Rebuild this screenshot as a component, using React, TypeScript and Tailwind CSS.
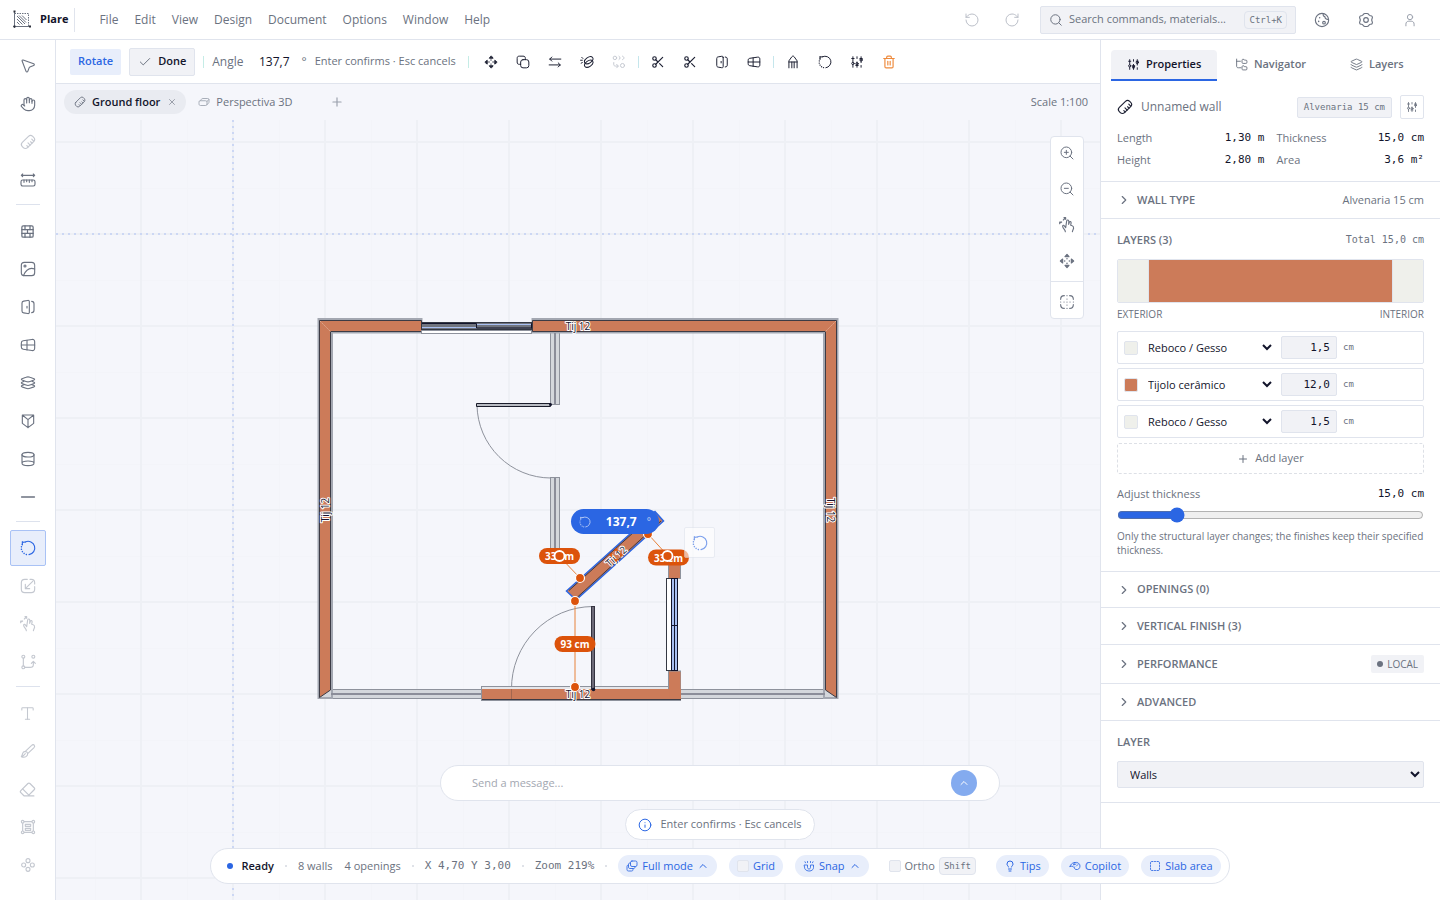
import { useState, type ReactNode } from 'react'
import { Hand, BrickWall, Type, Eraser, Scissors, ZoomIn, ZoomOut, RotateCcw, RotateCw, Search, Check, X, Plus, Minus, Trash2, ChevronRight, ChevronUp, Info, Lightbulb, Layers } from 'lucide-react'
import clsx from 'clsx'

const glyphs: Record<string, ReactNode> = {
  cursor: <path d="M3.2 4.6c-.4-1.1.4-1.9 1.500-1.500l15.800 5.600c1.300.5 1.300 2.100 0 2.600l-5.700 2.100c-.5.2-.8.5-1 1l-2.100 5.600c-.5 1.300-2.100 1.300-2.600 0z" />,
  wall: (
    <g transform="rotate(-45 12 12)">
      <rect x="1" y="6.500" width="22" height="11" rx="4.500" />
      <path d="M7 17.500v-3M11 17.500v-4.500M15 17.500v-3M19 17v-4" />
    </g>
  ),
  measure: (
    <>
      <rect x="1.500" y="12" width="21" height="9" rx="2.500" />
      <path d="M6 12v3.500M10 12v2.500M14 12v3.500M18 12v2.500M2 5h20M4 3 2 5l2 2M20 3l2 2-2 2" />
    </>
  ),
  image: (
    <>
      <rect x="2" y="2" width="20" height="20" rx="4.500" />
      <circle cx="7.500" cy="7.500" r="1.500" />
      <path d="M5 22c4-9 9-13 17-10" />
    </>
  ),
  door: (
    <>
      <path d="M14 4v16c0 1.500-1 2-2.500 1.800l-6-1C3.700 20.500 3 19.500 3 18V6c0-1.500.7-2.500 2.500-2.800l6-1C13 2 14 2.500 14 4z" />
      <path d="M10.500 11v2.500M17.500 3.500c2.500 0 3.500 1 3.500 3.500v10c0 2.500-1 3.500-3.500 3.500" />
    </>
  ),
  window: (
    <>
      <path d="M2 9c0-2 .8-3 2.800-3.300l13-2c2.700-.4 4.200.8 4.200 3.300v10c0 2.500-1.500 3.700-4.200 3.300l-13-2C2.800 18 2 17 2 15z" />
      <path d="M2 12h20M10.500 5v14.500" />
    </>
  ),
  stack: (
    <>
      <path d="M3 7.500c-1.300-.7-1.300-1.300 0-2l6-2c2-.8 4-.8 6 0l6 2c1.300.7 1.300 1.300 0 2l-6 2.200c-2 .8-4 .8-6 0z" />
      <path d="M6 9.500l-3 1.400c-1.300.7-1.300 1.300 0 2l6 2.200c2 .8 4 .8 6 0l6-2.200c1.300-.7 1.300-1.300 0-2l-3-1.400" />
      <path d="M6 14.500l-3 1.300c-1.300.7-1.300 1.300 0 2l6 2.200c2 .8 4 .8 6 0l6-2.200c1.300-.7 1.300-1.300 0-2l-3-1.300" />
    </>
  ),
  prism: <path d="M3.500 3h17v12.500L12 22l-8.500-6.500zM3.500 3 12 10l8.500-7M12 10v12" />,
  column: (
    <>
      <ellipse cx="12" cy="5.500" rx="9" ry="3.500" />
      <path d="M3 5.500v13c0 4.600 18 4.600 18 0v-13M3 18.500c0-4.600 18-4.600 18 0" />
    </>
  ),
  rotate: (
    <>
      <path d="M8 2.900A10 10 0 1 1 13.500 21.900" />
      <path d="M9.500 21.700A10 10 0 0 1 3.500 6.700" strokeDasharray="0.100 3.600" strokeWidth="2.200" />
      <path d="M3.500 2.500v4.500M3.500 3.500 8 3" />
    </>
  ),
  rescale: (
    <>
      <path d="M11 2H7C3.500 2 2 3.500 2 7v10c0 3.500 1.500 5 5 5h10c3.500 0 5-1.500 5-5v-4M15 2h2c3.500 0 5 1.500 5 5v2" />
      <path d="M19 5 8 16M8 9.500V16h6.500" />
    </>
  ),
  pinch: (
    <>
      <path d="M9.500 22c0-3-3.500-4.500-4-8-.1-1.700 1.500-2.200 2.500-.8l2 2.800 1.500-10c.4-2.200 3.200-1.800 3.200.3L14.500 11l1-3c.7-1.800 3-1.200 2.700.8l-.7 3.500 1.600.4c2.500.7 3 2 2.800 4-.2 2-1.600 3-1.800 5.300" />
      <path d="M1 10V7.500h2.500M7.500 1H10v2.500M2.500 8.500l1.500-1M6.500 4.500 9 2" />
    </>
  ),
  nodes: (
    <>
      <circle cx="5" cy="4" r="2.200" />
      <circle cx="5" cy="20" r="2.200" />
      <circle cx="20" cy="4" r="2.200" />
      <path d="M5 6v12M7 20h8c3.500 0 5-1 5-4v-5M17 14l3-3 3 3" />
    </>
  ),
  brush: <path d="M8 12.500 17.500 3.500c1.500-1.500 3-1.500 4 0 .8 1 .5 2.500-.8 3.800L11.500 16M8 12.500c-2 .3-3.500 1-4 3-.4 1.800-.8 3.500-2 5 3 1.500 5.500 1 7.500-.5 1.200-1 2-2.300 2-4M8 12.500c2 .3 3.200 1.500 3.500 3.500M4 20l4-4" />,
  frame: (
    <>
      <rect x="4" y="4" width="16" height="16" />
      <circle cx="4" cy="4" r="2" fill="white" />
      <circle cx="20" cy="4" r="2" fill="white" />
      <circle cx="4" cy="20" r="2" fill="white" />
      <circle cx="20" cy="20" r="2" fill="white" />
      <rect x="8" y="8" width="8" height="3" />
      <rect x="8" y="14" width="8" height="3" />
    </>
  ),
  clover: (
    <>
      <circle cx="12" cy="5.500" r="3" />
      <circle cx="5.500" cy="12" r="3" />
      <circle cx="18.500" cy="12" r="3" />
      <circle cx="12" cy="18.500" r="3" />
    </>
  ),
  move: (
    <>
      <path d="M12 2 9 5.500h6zM12 22l-3-3.500h6zM2 12l3.500-3v6zM22 12l-3.500-3v6z" fill="currentColor" />
      <path d="M12 8.500v.1M12 15.500v.1M8.500 12h.1M15.500 12h.1" strokeWidth="2.200" />
    </>
  ),
  copy: (
    <>
      <rect x="8" y="8" width="14" height="14" rx="4" />
      <path d="M16 8V6c0-3-1-4-4-4H6C3 2 2 3 2 6v6c0 3 1 4 4 4h2" />
    </>
  ),
  swap: <path d="M22 7H3M6.500 3.500 3 7l3.500 3.500M2 17h19M17.500 13.500 21 17l-3.500 3.500" />,
  offset: (
    <>
      <ellipse cx="15" cy="9" rx="8" ry="5" transform="rotate(-35 15 9)" />
      <ellipse cx="15" cy="15" rx="8" ry="5" transform="rotate(-35 15 15)" />
      <path d="M1 9h3M2 14l2-1M3 4l2 2" />
    </>
  ),
  array: (
    <>
      <circle cx="5" cy="5" r="3" />
      <circle cx="18" cy="18" r="3.500" />
      <path d="M12 2c2.500 1 2.500 5 0 6M18 2c3.500 1 3.500 5 0 6M3 13v3c0 2 1 3 3 3h4M8 16l3 3-3 3" />
    </>
  ),
  pencil: <path d="M5 22V10l5-7c1-1.500 3-1.500 4 0l5 7v12M5 12h14M10 12v10M14 12v10" />,
  sliders: (
    <>
      <path d="M5 3v9M5 17v4M12 3v3M12 12v9M19 3v10M19 18v3M3 6h4M17 6h4M10 18h4" />
      <circle cx="5" cy="14.500" r="2" />
      <circle cx="12" cy="15" r="2" />
      <circle cx="19" cy="8.500" r="2" />
    </>
  ),
  cookie: (
    <>
      <circle cx="12" cy="12" r="10" />
      <path d="M14 2.200c-.8 2.300 0 4.300 2.200 4.800.3 2.500 2.300 4.500 5.500 4" />
      <circle cx="15" cy="16" r="2" />
      <path d="M8.500 8.500v.1M7 14v.1" strokeWidth="2.200" />
    </>
  ),
  gear: (
    <>
      <circle cx="12" cy="12" r="3.500" />
      <path d="M8 3.500c.7-1 1.300-1.300 2.500-1.300h3c1.200 0 1.800.3 2.500 1.300l1 1.400c.4.500.8.700 1.500.700h1c1 .1 1.700.8 2 1.800.3 1 .1 1.700-.4 2.500-.8 1.400-.8 2.800 0 4.200.5.8.7 1.500.4 2.500-.3 1-1 1.700-2 1.800h-1c-.7 0-1.100.2-1.500.7l-1 1.400c-.7 1-1.300 1.300-2.500 1.300h-3c-1.200 0-1.800-.3-2.500-1.300l-1-1.400c-.4-.5-.8-.7-1.500-.7h-1c-1-.1-1.700-.8-2-1.800-.3-1-.1-1.700.4-2.500.8-1.400.8-2.800 0-4.200-.5-.8-.7-1.500-.4-2.500.3-1 1-1.700 2-1.800h1c.7 0 1.100-.2 1.500-.7z" />
    </>
  ),
  user: (
    <>
      <circle cx="12" cy="7" r="4.500" />
      <path d="M5 22v-3c0-3 2-5 5-5h4c3 0 5 2 5 5v3" />
    </>
  ),
  tree: (
    <>
      <path d="M3 2v13c0 2 1 3 3 3h5M3 6h7" />
      <path d="M13 4c0-1 .5-1.500 1.500-1.500h2l1 1.500H20c1.500 0 2 .5 2 2v2c0 1.500-.5 2-2 2h-5c-1.500 0-2-.5-2-2zM13 16c0-1 .5-1.500 1.500-1.500h2l1 1.500H20c1.500 0 2 .5 2 2v2c0 1.500-.5 2-2 2h-5c-1.500 0-2-.5-2-2z" />
    </>
  ),
  slab3d: <path d="M2 12c0-2 1-2.500 2.500-2.500H15c2 0 3 .5 3 2.500v4c0 2-1 3-3 3H5c-2 0-3-1-3-3zM4 9.500l3-3C7.800 5.500 8.500 5 10 5h9c2 0 3 .5 3 2.500V12c0 1-.3 1.500-1 2.200l-3.500 3.500M18 11l3.500-4" />,
  fit: (
    <>
      <path d="M2.500 8c0-4 1.500-5.500 5.500-5.500M16 2.500c4 0 5.500 1.500 5.500 5.500M21.500 16c0 4-1.500 5.500-5.500 5.500M8 21.500c-4 0-5.500-1.500-5.500-5.500" />
      <path d="M12 7.500v.1M12 12v.1M12 16.500v.1M7.500 12h.1M16.500 12h.1" />
      <path d="M12 2.500v.1M12 21.500v.1M2.500 12h.1M21.500 12h.1" />
    </>
  ),
  mode: (
    <>
      <rect x="9" y="2" width="13" height="11" rx="3" />
      <path d="M9 6H8C6 6 5 7 5 9v5c0 2 1 3 3 3h7c2 0 3-1 3-3v-1M5 10c-2 0-3 1-3 3v6c0 2 1 3 3 3h6c2 0 3-1 3-3v-2" />
    </>
  ),
  magnet: <path d="M3 10h6v5c0 4 6 4 6 0v-5h6v5c0 9.500-18 9.500-18 0zM5 5.500 4 3.500M9 5V3M15 5V3M19 5.500l1-2" />,
  copilot: <path d="M2 13c1-4 4-7 9-8 6-1.200 11 2 11 7s-4 8-8 7c-3-.7-4-3-3-5M2 13l4-1 3 2M11 5l-2 5 5-2M15 12l3-3" />,
  slab: <path d="M3 8V6c0-2 1-3 3-3h2M11 3h2M16 3h2c2 0 3 1 3 3v2M21 11v2M21 16v2c0 2-1 3-3 3h-2M13 21h-2M8 21H6c-2 0-3-1-3-3v-2M3 13v-2" />,
}

function Glyph({ name, className = 'size-4' }: { name: string; className?: string }) {
  return (
    <svg viewBox="0 0 24 24" fill="none" stroke="currentColor" strokeWidth="1.700" strokeLinecap="round" strokeLinejoin="round" className={clsx('shrink-0', className)} aria-hidden="true">
      {glyphs[name]}
    </svg>
  )
}

type Tool = { label: string; icon: ReactNode; off?: boolean }
const g = (name: string) => <Glyph name={name} />

const railGroups: Tool[][] = [
  [
    { label: 'Select', icon: g('cursor') },
    { label: 'Pan', icon: <Hand size={16} strokeWidth={1.7} /> },
    { label: 'Wall', icon: g('wall'), off: true },
    { label: 'Measure', icon: g('measure') },
  ],
  [
    { label: 'Bricks', icon: <BrickWall size={15} strokeWidth={2} /> },
    { label: 'Image', icon: g('image') },
    { label: 'Door', icon: g('door') },
    { label: 'Window', icon: g('window') },
    { label: 'Slab', icon: g('stack') },
    { label: 'Prism', icon: g('prism') },
    { label: 'Column', icon: g('column') },
    { label: 'Line', icon: <Minus size={22} strokeWidth={1.5} /> },
  ],
  [
    { label: 'Rotate', icon: g('rotate') },
    { label: 'Scale', icon: g('rescale'), off: true },
    { label: 'Stretch', icon: g('pinch'), off: true },
    { label: 'Edit nodes', icon: g('nodes'), off: true },
  ],
  [
    { label: 'Text', icon: <Type size={17} strokeWidth={1.5} />, off: true },
    { label: 'Brush', icon: g('brush'), off: true },
    { label: 'Erase', icon: <Eraser size={17} strokeWidth={1.7} />, off: true },
    { label: 'Frame', icon: g('frame'), off: true },
    { label: 'Group', icon: g('clover'), off: true },
  ],
]

const actionGroups: Tool[][] = [
  [
    { label: 'Move', icon: <Glyph name="move" className="size-[14px]" /> },
    { label: 'Copy', icon: <Glyph name="copy" className="size-[14px]" /> },
    { label: 'Mirror', icon: <Glyph name="swap" className="size-[14px]" /> },
    { label: 'Offset', icon: <Glyph name="offset" className="size-[14px]" /> },
    { label: 'Array', icon: <Glyph name="array" className="size-[14px]" />, off: true },
  ],
  [
    { label: 'Split', icon: <Scissors size={14} /> },
    { label: 'Trim', icon: <Scissors size={14} /> },
    { label: 'Add door', icon: <Glyph name="door" className="size-[14px]" /> },
    { label: 'Add window', icon: <Glyph name="window" className="size-[14px]" /> },
  ],
  [
    { label: 'Edit', icon: <Glyph name="pencil" className="size-[14px]" /> },
    { label: 'Rotate again', icon: <Glyph name="rotate" className="size-[14px]" /> },
    { label: 'Adjust', icon: <Glyph name="sliders" className="size-[14px]" /> },
    { label: 'Delete', icon: <Trash2 size={14} /> },
  ],
]

const mono = "font-['DejaVu_Sans_Mono',monospace]"

function TopBar() {
  return (
    <header className="flex h-10 shrink-0 items-center border-b border-[#e0e4ed] bg-white">
      <svg viewBox="0 0 20 20" className="ml-3 size-5" fill="none" stroke="#6b7280" aria-hidden="true">
        <path d="M2.500 1v17M1 16.500h17" stroke="#6b7280" />
        <path d="M2.500 3.500h14v13" strokeDasharray="1.500 1" />
        <path d="M5 6l8 8M7 5.500l7 7M5 9l5.500 5.500M10 5.500l4.500 4.500M5 12l2.500 2.500" strokeWidth="1" />
        <path d="M1.500 1.500h2M17 16.500h2M1.500 16.500h2" stroke="#2b2f3a" strokeWidth="2" />
      </svg>
      <div className="ml-2 flex h-6 items-center border-r border-[#e0e4ed] pr-1.5 text-[11px] font-bold text-[#12142b]">Plare</div>
      <nav className="ml-4 flex">
        {['File', 'Edit', 'View', 'Design', 'Document', 'Options', 'Window', 'Help'].map((m) => (
          <button key={m} className="px-2 py-1 text-xs text-[#6b7280]">{m}</button>
        ))}
      </nav>
      <div className="ml-auto flex items-center">
        <button aria-label="Undo" className="grid size-10 place-items-center text-[#bcc0c9]"><RotateCcw size={16} strokeWidth={1.5} /></button>
        <button aria-label="Redo" className="grid size-10 place-items-center text-[#bcc0c9]"><RotateCw size={16} strokeWidth={1.5} /></button>
        <button className="ml-2 flex h-7 w-64 items-center gap-1.5 rounded-xs border border-[#e0e4ed] bg-[#f1f2f6] px-2 text-left text-[11px] text-[#6b7280]">
          <Search size={14} strokeWidth={1.7} className="shrink-0" />
          <span className="whitespace-nowrap">Search commands, materials...</span>
          <kbd className={clsx(mono, 'ml-auto rounded-sm border border-[#e0e4ed] px-1 text-[9px] leading-4')}>Ctrl+K</kbd>
        </button>
        <button aria-label="Theme" className="ml-1 grid h-8 w-11 place-items-center text-[#6b7280]">{g('cookie')}</button>
        <button aria-label="Settings" className="grid h-8 w-11 place-items-center text-[#6b7280]">{g('gear')}</button>
        <button aria-label="Account" className="mr-2 grid h-8 w-11 place-items-center text-[#9aa0ac]"><Glyph name="user" className="size-[14px]" /></button>
      </div>
    </header>
  )
}

function Rail() {
  const [active, setActive] = useState('Rotate')
  return (
    <aside className="flex w-14 shrink-0 flex-col items-center gap-0.5 border-r border-[#e0e4ed] bg-white pt-2">
      {railGroups.map((tools, i) => (
        <div key={i} className="flex flex-col items-center gap-0.5">
          {i > 0 && <div className="mt-1 mb-1.5 h-px w-6 bg-[#dde2ed]" />}
          {tools.map((t) => (
            <button
              key={t.label}
              aria-label={t.label}
              onClick={() => setActive(t.label)}
              className={clsx(
                'grid size-9 place-items-center rounded-xs border',
                active === t.label ? 'border-[#a9c2f5] bg-[#e8eefb] text-[#2b66e3]' : t.off ? 'border-transparent text-[#c4c8d0]' : 'border-transparent text-[#6b7280]',
              )}
            >
              {t.icon}
            </button>
          ))}
        </div>
      ))}
    </aside>
  )
}

function OptionsBar() {
  const [angle, setAngle] = useState('137,7')
  return (
    <div className="flex h-11 shrink-0 items-center border-b border-[#e0e4ed] bg-white pl-3.5 text-xs text-[#6b7280]">
      <button className="h-[26px] rounded-xs bg-[#e8eefb] px-2 text-[11px] font-semibold text-[#2b66e3]">Rotate</button>
      <button className="ml-2 flex h-7 items-center gap-1.5 rounded-xs border border-[#e0e4ed] bg-[#f1f2f6] px-2 text-[11px] font-semibold text-[#12142b]">
        <Check size={14} strokeWidth={1.7} className="text-[#6b7280]" />
        Done
      </button>
      <div className="mx-2 h-3 w-px bg-[#c5ece6]" />
      <label htmlFor="angle">Angle</label>
      <input id="angle" value={angle} onChange={(e) => setAngle(e.target.value)} className="w-[46px] text-right text-xs text-[#12142b] outline-none" />
      <span className="ml-3">°</span>
      <span className="ml-2 text-[11px] whitespace-nowrap">Enter confirms · Esc cancels</span>
      <div className="ml-3 h-3 w-px bg-[#c5ece6]" />
      <div className="ml-1.5 flex items-center text-[#1d2033]">
        {actionGroups.map((tools, i) => (
          <div key={i} className="flex items-center">
            {i > 0 && <div className="mx-[3px] h-3 w-px bg-[#c5e6ec]" />}
            {tools.map((t) => (
              <button key={t.label} aria-label={t.label} className={clsx('grid h-8 w-8 place-items-center', t.off && 'text-[#c4c8d0]', t.label === 'Delete' && 'text-[#ee8a3c]')}>
                {t.icon}
              </button>
            ))}
          </div>
        ))}
      </div>
    </div>
  )
}

function ViewTabs() {
  return (
    <div className="relative flex h-9 items-center pr-3 pl-2 text-[11px] text-[#6b7280]">
      <div className="flex h-6 items-center rounded-full bg-[#e9ebf1] pr-2 pl-2.5">
        <button className="flex items-center gap-1.5 font-semibold text-[#12142b]">
          <Glyph name="wall" className="size-3 text-[#6b7280]" />
          Ground floor
        </button>
        <button aria-label="Close Ground floor" className="ml-1.5 grid size-3 place-items-center text-[#8a8f9b]"><X size={10} /></button>
      </div>
      <button className="ml-3 flex items-center gap-1.5">
        <Glyph name="slab3d" className="size-3 text-[#9aa0ac]" />
        Perspectiva 3D
      </button>
      <button aria-label="New view" className="ml-9 grid size-4 place-items-center text-[#9aa0ac]"><Plus size={14} /></button>
      <span className="ml-auto">Scale 1:100</span>
    </div>
  )
}

function WallTag({ x, y, turn = 0 }: { x: number; y: number; turn?: number }) {
  return (
    <text transform={`translate(${x} ${y}) rotate(${turn})`} y="4" textAnchor="middle" fontSize="10" fill="#17132f" stroke="white" strokeWidth="2" strokeLinejoin="round" paintOrder="stroke">
      Tij 12
    </text>
  )
}

function Handle({ x, y, hollow }: { x: number; y: number; hollow?: boolean }) {
  return <circle cx={x} cy={y} r={hollow ? 5 : 4.5} fill="#dc530b" stroke="white" strokeWidth={hollow ? 1.8 : 1.2} />
}

function Distance({ x, y, text }: { x: number; y: number; text: string }) {
  return (
    <g>
      <rect x={x - 20.5} y={y - 8} width="41" height="16" rx="8" fill="#dc530b" />
      <text x={x} y={y + 4} textAnchor="middle" fontSize="10" fontWeight="700" fill="white">{text}</text>
    </g>
  )
}

function FloorPlan() {
  return (
    <svg className="absolute inset-0 size-full" aria-label="Floor plan">
      <defs>
        <pattern id="grid" width="92" height="92" patternUnits="userSpaceOnUse" x="141" y="142">
          <path d="M46.500 0v92M0 46.500h92" stroke="#f3f4f9" fill="none" />
          <path d="M0 0v92M0 0h92M92 0v92M0 92h92" stroke="#eef0f5" strokeWidth="2" fill="none" />
        </pattern>
      </defs>
      <g transform="translate(-56 -120)">
        <rect x="56" y="120" width="4000" height="4000" fill="url(#grid)" />
        <path d="M56 234h4000M233 120v4000" stroke="#ccd7f4" strokeWidth="2" strokeDasharray="2 4" />

        {/* plaster and secondary walls */}
        <g fill="#d4d7dc" stroke="#8e929c">
          <rect x="330.500" y="689.500" width="495" height="9" />
          <rect x="550.500" y="332.500" width="9" height="72" />
          <rect x="550.500" y="477.500" width="9" height="80" />
          <path d="M421.500 319h-103v379h13.500v-365.500h89.500zM532.500 319h305v379h-13.500v-365.500h-291.500z" stroke="#a3a7b1" strokeWidth="2" />
        </g>
        <path d="M331 694h494M555 333v71M555 478v79" stroke="#8b8d99" strokeWidth="2" />

        {/* brick core */}
        <path d="M421.500 320.500h-102v377l11-7.500V331.500h91zM532.500 320.500h304v377l-11-7.500V331.500h-293z" fill="#cc7b59" stroke="#3c3b45" />
        <path d="M320 321l11 11M836 321l-11 11" stroke="#e0a88f" strokeDasharray="2 1" />

        {/* top window */}
        <rect x="421.500" y="330.500" width="110" height="3" fill="white" stroke="#8e929c" />
        <rect x="421.500" y="322.500" width="110" height="7" fill="#71757f" stroke="#343843" />
        <path d="M422 327.500h55M477 324.500h55" stroke="#a9c0f2" />
        <path d="M422 323.500h54.500v4.500h55v-4.500" fill="none" stroke="#12142b" />

        {/* doors */}
        <path d="M477 405a74 74 0 0 0 74 73" fill="none" stroke="#8e929c" />
        <path d="M476.500 403.500h74v3h-74z" fill="#b9bcc3" stroke="#1a1c2b" />
        <circle cx="550.500" cy="404.500" r="1.500" fill="#12142b" />
        <path d="M593 606.500a82 82 0 0 0-81.500 83v9" fill="none" stroke="#8e929c" />

        {/* bottom and side stub */}
        <rect x="481.500" y="686.500" width="199" height="14" fill="#e6e7eb" stroke="#8e929c" />
        <rect x="668.500" y="558.500" width="12" height="20" fill="#cc7b59" stroke="#8e929c" />
        <rect x="668.500" y="671" width="12" height="22" fill="#cc7b59" stroke="#8e929c" />
        <rect x="482" y="689" width="199" height="10" fill="#cc7b59" />
        <rect x="669.500" y="672" width="11" height="26" fill="#cc7b59" />
        <path d="M482 699.500h199" stroke="#3c3b45" />
        <path d="M511.500 689v10" stroke="#a4674f" />
        <rect x="591.500" y="606.500" width="3" height="83" fill="#6d6a78" stroke="#343340" />
        <circle cx="593.500" cy="689.500" r="1.800" fill="#12142b" />
        <rect x="666.500" y="578.500" width="5" height="92" fill="white" stroke="#343843" />
        <rect x="671.500" y="578.500" width="6" height="92" fill="#a9c0f2" stroke="#12142b" />
        <path d="M674.500 579v92M672 625.500h6" stroke="#12142b" />

        <WallTag x={578} y={326} />
        <WallTag x={325} y={510} turn={-90} />
        <WallTag x={831} y={510} turn={90} />
        <WallTag x={578} y={694} />

        {/* wall being rotated */}
        <path d="M566.500 591 655 511.500l8.500 9.500-87.500 79z" fill="#cc7b59" stroke="#2b66e3" strokeWidth="1.500" />
        <path d="M569 590.500 654 514M577 597.500 661 521" stroke="#3c3b45" />
        <WallTag x={616} y={556} turn={-42} />
        <svg x="608" y="547" width="16" height="16" viewBox="0 0 24 24" fill="none" stroke="#dc530b" color="#dc530b">{glyphs.move}</svg>

        <path d="M559 556l21 22M648 534l20 22M575 601v86" stroke="#e7823b" />
        <Distance x={559.5} y={556} text="33 cm" />
        <Distance x={668.5} y={557.5} text="33 cm" />
        <Distance x={575} y={644} text="93 cm" />
        <Handle x={559.5} y={556} hollow />
        <Handle x={667.5} y={556} hollow />
        <Handle x={580} y={578} />
        <Handle x={648} y={534} />
        <Handle x={575} y={601} />
        <Handle x={575} y={687} />
      </g>
    </svg>
  )
}

function Canvas() {
  const [angle, setAngle] = useState('137,7')
  return (
    <div className="relative flex-1 overflow-hidden">
      <FloorPlan />
      <div className="absolute top-[389px] left-[515px] flex h-[25px] w-[88px] items-center rounded-full bg-[#2b66e3] px-2 text-white">
        <Glyph name="rotate" className="size-3 opacity-70" />
        <input aria-label="Rotation angle" value={angle} onChange={(e) => setAngle(e.target.value)} className="w-[46px] min-w-0 text-right text-xs font-bold outline-none" />
        <span className="ml-2.5 text-[10px] opacity-70">°</span>
      </div>
      <button aria-label="Rotate wall" className="absolute top-[407px] left-[628px] grid size-[31px] place-items-center rounded-xs border border-[#e0e4ed] bg-white text-[#2b66e3] opacity-60">
        {g('rotate')}
      </button>
      <div className="absolute top-4 right-4 flex w-[34px] flex-col items-center gap-1 rounded-sm border border-[#e0e4ed] bg-white text-[#6b7280]">
        <button aria-label="Zoom in" className="grid size-8 place-items-center"><ZoomIn size={16} strokeWidth={1.5} /></button>
        <button aria-label="Zoom out" className="grid size-8 place-items-center"><ZoomOut size={16} strokeWidth={1.5} /></button>
        <button aria-label="Pan view" className="grid size-8 place-items-center">{g('pinch')}</button>
        <button aria-label="Centre" className="grid size-8 place-items-center">{g('move')}</button>
        <div className="h-px w-full bg-[#e0e4ed]" />
        <button aria-label="Fit to screen" className="grid size-8 place-items-center">{g('fit')}</button>
      </div>
    </div>
  )
}

function Metric({ label, value }: { label: string; value: string }) {
  return (
    <div className="flex items-center justify-between">
      <dt>{label}</dt>
      <dd className={clsx(mono, 'text-[#12142b]')}>{value}</dd>
    </div>
  )
}

function Section({ title, height = 'h-[37px]', children }: { title: string; height?: string; children?: ReactNode }) {
  return (
    <button className={clsx('flex w-full items-center border-b border-[#e0e4ed] px-4 text-left text-[11px] text-[#6b7280]', height)}>
      <ChevronRight size={14} strokeWidth={2} className="mr-1.5" />
      <span className="font-semibold">{title}</span>
      <span className="ml-auto">{children}</span>
    </button>
  )
}

const wallLayers = [
  { material: 'Reboco / Gesso', size: '1,5', swatch: 'bg-[#eff0eb]' },
  { material: 'Tijolo cerâmico', size: '12,0', swatch: 'bg-[#cc7b59]' },
  { material: 'Reboco / Gesso', size: '1,5', swatch: 'bg-[#eff0eb]' },
]

function Inspector() {
  const [tab, setTab] = useState('Properties')
  const tabs = [
    { name: 'Properties', icon: <Glyph name="sliders" className="size-[13px]" /> },
    { name: 'Navigator', icon: <Glyph name="tree" className="size-[13px]" /> },
    { name: 'Layers', icon: <Layers size={13} strokeWidth={1.7} /> },
  ]
  return (
    <aside className="w-[340px] shrink-0 border-l border-[#e0e4ed] bg-white text-[11px] text-[#6b7280]">
      <div className="flex px-2.5 pt-2.5" role="tablist">
        {tabs.map((t) => (
          <button
            key={t.name}
            role="tab"
            aria-selected={tab === t.name}
            onClick={() => setTab(t.name)}
            className={clsx(
              'flex h-[31px] flex-1 items-center justify-center gap-1.5 rounded-t-sm border-b-2 font-semibold',
              tab === t.name ? 'border-[#2b66e3] bg-[#f1f2f6] text-[#12142b]' : 'border-transparent',
            )}
          >
            {t.icon}
            {t.name}
          </button>
        ))}
      </div>

      <div className="border-b border-[#e0e4ed] px-4 pt-3.5 pb-2.5">
        <div className="flex items-center">
          <Glyph name="wall" className="size-4 text-[#1d2033]" />
          <h2 className="ml-2 text-xs">Unnamed wall</h2>
          <span className={clsx(mono, 'ml-auto rounded-xs border border-[#e0e4ed] bg-[#f1f2f6] px-1.5 text-[9px] leading-[19px]')}>Alvenaria 15 cm</span>
          <button aria-label="Wall settings" className="ml-2 grid size-6 place-items-center rounded-xs border border-[#e0e4ed]"><Glyph name="sliders" className="size-3" /></button>
        </div>
        <dl className="mt-2 grid grid-cols-2 gap-x-3 leading-[22px]">
          <Metric label="Length" value="1,30 m" />
          <Metric label="Thickness" value="15,0 cm" />
          <Metric label="Height" value="2,80 m" />
          <Metric label="Area" value="3,6 m²" />
        </dl>
      </div>

      <Section title="WALL TYPE">Alvenaria 15 cm</Section>

      <div className="border-b border-[#e0e4ed] px-4 pt-3 pb-3.5">
        <div className="flex items-center justify-between leading-[18px]">
          <h3 className="font-semibold">LAYERS (3)</h3>
          <span className={clsx(mono, 'text-[10px]')}>Total 15,0 cm</span>
        </div>
        <div className="mt-2.5 flex h-11 overflow-hidden rounded-xs border border-[#e0e4ed]">
          <div className="flex-[1] border-r border-[#e0e4ed] bg-[#eff0eb]" />
          <div className="flex-[8] bg-[#cc7b59]" />
          <div className="flex-[1] border-l border-[#e0e4ed] bg-[#eff0eb]" />
        </div>
        <div className="mt-1 flex justify-between text-[10px] leading-[14px]">
          <span>EXTERIOR</span>
          <span>INTERIOR</span>
        </div>

        <div className="mt-2.5 flex flex-col gap-1">
          {wallLayers.map((l, i) => (
            <div key={i} className="flex h-[33px] items-center rounded-xs border border-[#e0e4ed] px-1.5">
              <span className={clsx('size-3.5 rounded-xs border border-[#e0e4ed]', l.swatch)} />
              <select aria-label={`Material of layer ${i + 1}`} defaultValue={l.material} className="ml-1.5 w-[131px] text-[11px] text-[#12142b]">
                <option>Reboco / Gesso</option>
                <option>Tijolo cerâmico</option>
              </select>
              <input aria-label={`Thickness of layer ${i + 1}`} defaultValue={l.size} className={clsx(mono, 'ml-1.5 h-[23px] w-14 rounded-xs border border-[#e0e4ed] bg-[#f1f2f6] px-1.5 text-right text-[#12142b]')} />
              <span className={clsx(mono, 'ml-1.5 text-[9px]')}>cm</span>
            </div>
          ))}
        </div>
        <button className="mt-[5px] flex h-[31px] w-full items-center justify-center gap-1.5 rounded-xs border border-dashed border-[#dde0e6]">
          <Plus size={12} />
          Add layer
        </button>

        <div className="mt-2.5 flex items-center justify-between leading-5">
          <label htmlFor="thickness">Adjust thickness</label>
          <output htmlFor="thickness" className={clsx(mono, 'text-[#12142b]')}>15,0 cm</output>
        </div>
        <input id="thickness" type="range" defaultValue={18} className="mt-[3px] block h-4 w-full accent-[#2b66e3]" />
        <p className="mt-1.5 text-[10px] leading-[14px]">Only the structural layer changes; the finishes keep their specified thickness.</p>
      </div>

      <Section title="OPENINGS (0)" height="h-9" />
      <Section title="VERTICAL FINISH (3)" />
      <Section title="PERFORMANCE" height="h-[39px]">
        <span className="flex h-[18px] items-center gap-1 rounded-xs bg-[#f1f2f6] px-1.5 text-[10px]">
          <span className="size-1.5 rounded-full bg-[#6b7280]" />
          LOCAL
        </span>
      </Section>
      <Section title="ADVANCED" />

      <div className="border-b border-[#e0e4ed] px-4 pt-3 pb-3.5">
        <label htmlFor="layer" className="block leading-[18px] font-semibold">LAYER</label>
        <select id="layer" className="mt-2.5 h-[27px] w-full rounded-xs border border-[#e0e4ed] bg-[#f1f2f6] pl-2 text-[11px] text-[#12142b]">
          <option>Walls</option>
        </select>
      </div>
    </aside>
  )
}

const pill = 'flex h-[22px] items-center gap-1 rounded-full bg-[#e8eefb] px-2 text-[#2b66e3]'

function Dot() {
  return <span className="mx-[11px] size-0.5 rounded-full bg-[#d5d8e0]" />
}

function BottomBars() {
  return (
    <div className="pointer-events-none absolute inset-x-0 bottom-4 flex flex-col items-center gap-2 text-[11px] whitespace-nowrap text-[#6b7280]">
      <form className="pointer-events-auto flex h-9 w-[560px] items-center rounded-full border border-[#e0e4ed] bg-white pr-[22px] pl-[31px]" onSubmit={(e) => e.preventDefault()}>
        <input aria-label="Message" placeholder="Send a message..." className="min-w-0 flex-1 outline-none placeholder:text-[#a3a7b1]" />
        <button aria-label="Send" className="grid size-[26px] place-items-center rounded-full bg-[#84abef] text-white"><ChevronUp size={12} /></button>
      </form>
      <div className="pointer-events-auto flex h-[31px] items-center gap-2 rounded-full border border-[#e0e4ed] bg-white px-3">
        <Info size={14} strokeWidth={1.7} className="text-[#2b66e3]" />
        Enter confirms · Esc cancels
      </div>
      <div className="pointer-events-auto flex h-9 items-center rounded-full border border-[#e0e4ed] bg-white pr-2 pl-4">
        <span className="size-1.5 rounded-full bg-[#2b66e3]" />
        <span className="ml-2 font-semibold text-[#12142b]">Ready</span>
        <Dot />
        <span>8 walls</span>
        <span className="ml-3">4 openings</span>
        <Dot />
        <span className={mono}>X 4,70 Y 3,00</span>
        <Dot />
        <span className={mono}>Zoom 219%</span>
        <Dot />
        <div className="flex items-center gap-3">
          <button className={pill}><Glyph name="mode" className="size-3" />Full mode<ChevronUp size={12} /></button>
          <label className={pill}>
            <input type="checkbox" className="size-3 appearance-none rounded-xs border border-[#e0e4ed] bg-[#f1f2f6]" />
            Grid
          </label>
          <button className={pill}><Glyph name="magnet" className="size-3" />Snap<ChevronUp size={12} /></button>
          <label className="flex items-center gap-1 px-2">
            <input type="checkbox" className="size-3 appearance-none rounded-xs border border-[#e0e4ed] bg-[#f1f2f6]" />
            Ortho
            <kbd className={clsx(mono, 'rounded-sm border border-[#e0e4ed] bg-[#f1f2f6] px-1 text-[9px] leading-4')}>Shift</kbd>
          </label>
          <button className={pill}><Lightbulb size={12} />Tips</button>
          <button className={pill}><Glyph name="copilot" className="size-3" />Copilot</button>
          <button className={pill}><Glyph name="slab" className="size-3" />Slab area</button>
        </div>
      </div>
    </div>
  )
}

export default function App() {
  return (
    <div className="relative flex h-screen flex-col overflow-hidden bg-[#f5f6fb] font-['Open_Sans',sans-serif]">
      <TopBar />
      <div className="flex min-h-0 flex-1">
        <Rail />
        <main className="flex min-w-0 flex-1 flex-col">
          <OptionsBar />
          <ViewTabs />
          <Canvas />
        </main>
        <Inspector />
      </div>
      <BottomBars />
    </div>
  )
}
